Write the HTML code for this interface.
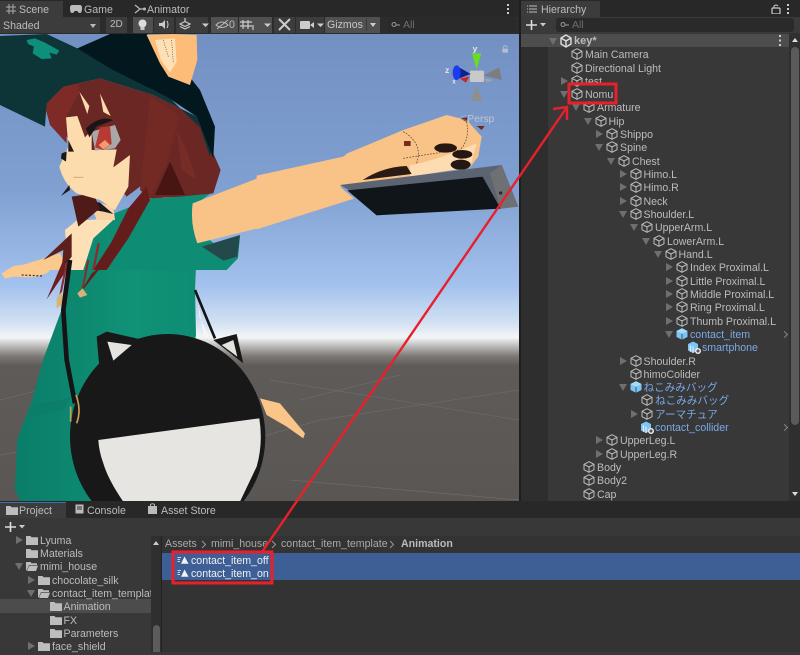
<!DOCTYPE html>
<html><head><meta charset="utf-8"><style>
html,body{margin:0;padding:0;background:#383838}
body{width:800px;height:652px;position:relative;overflow:hidden;font:10.6px/14px "Liberation Sans","Noto Sans CJK JP",sans-serif;color:#bcbcbc;filter:blur(.3px)}
.b{position:absolute}
.r{position:absolute;margin:0;height:14px;line-height:16px;white-space:nowrap}
.c{position:absolute;left:-14px;top:1px;width:12px;height:12px}
.d,.t{position:absolute;width:0;height:0;left:-25px}
.d{top:4px;border-left:4px solid transparent;border-right:4px solid transparent;border-top:7px solid #6f6f6f}
.t{top:3px;left:-24px;border-top:4px solid transparent;border-bottom:4px solid transparent;border-left:7px solid #6f6f6f}
.p{color:#7aa9e8}
.ch{position:absolute;left:782px;width:4px;height:4px;border-top:1.2px solid #888;border-right:1.2px solid #888;transform:rotate(45deg)}
.tb{position:absolute;top:17px;height:16px;background:#3c3c3c}
.tl{background:#505050}
.tx{position:absolute;white-space:nowrap}
.f{position:absolute;left:-14px;top:2px;width:12px;height:10px}
</style></head><body>
<svg width="0" height="0" style="position:absolute"><defs>
<symbol id="cb" viewBox="0 0 12 12"><path d="M6 .7 11 3.3V8.7L6 11.3 1 8.7V3.3ZM1 3.3 6 6 11 3.3M6 6V11.3" fill="none" stroke="#bdbdbd" stroke-width="1"/></symbol>
<symbol id="pf" viewBox="0 0 12 12"><path d="M6 .3 11.5 3V9L6 11.7 .5 9V3Z" fill="#7cc6f7"/><path d="M.5 3 6 5.8 11.5 3 6 .3Z" fill="#a6dcfb"/><path d="M6 5.8V11.7" stroke="#333" stroke-width=".8"/></symbol>
<symbol id="pp" viewBox="0 0 15 13"><path d="M1 3 6 .5 11 3V9.5L6 12 1 9.5Z" fill="#7cc6f7"/><path d="M6 5.5V12M3.5 4.3V10.8" stroke="#e8e8e8" stroke-width="1.2"/><circle cx="11" cy="10" r="3" fill="#eee"/><path d="M9.3 10H12.7M11 8.3V11.7" stroke="#222" stroke-width="1"/></symbol>
<symbol id="fd" viewBox="0 0 12 10"><path d="M0 1H4.5L5.5 2.2H12V10H0Z" fill="#bdbdbd"/></symbol>
<symbol id="fo" viewBox="0 0 12 10"><path d="M0 1H4.5L5.5 2.2H11V4H3L1 9 0 9.5ZM3.3 4.6H12L10 10H1Z" fill="#bdbdbd"/></symbol>
<symbol id="an" viewBox="0 0 12 10"><path d="M4 8.8 7.5 1.5 11.6 8.8Z" fill="#f2f2f2"/><path d="M.5 2.5H4M.5 4.5H3M.5 6.5H3" stroke="#cfd8e8" stroke-width="1"/></symbol>
<linearGradient id="sky" x1="0" y1="34" x2="0" y2="501" gradientUnits="userSpaceOnUse">
<stop offset="0" stop-color="#7390c2"/><stop offset=".33" stop-color="#80a0d2"/><stop offset=".54" stop-color="#a3c2ee"/><stop offset=".62" stop-color="#d4e2f2"/><stop offset=".65" stop-color="#f3f6f6"/><stop offset=".67" stop-color="#b6b6b4"/><stop offset=".69" stop-color="#7d7976"/><stop offset=".71" stop-color="#5f5b58"/><stop offset="1" stop-color="#5a5653"/></linearGradient>
<linearGradient id="teal" x1="0" y1="0" x2="1" y2="0"><stop offset="0" stop-color="#0a7d68"/><stop offset=".55" stop-color="#109276"/><stop offset="1" stop-color="#0c8a72"/></linearGradient>
</defs></svg>

<!-- scene -->
<svg class="b" style="left:0;top:0;clip-path:inset(34px 281px 151px 0)" width="800" height="652" viewBox="0 0 800 652">
<rect x="0" y="34" width="519" height="467" fill="url(#sky)"/>
<g stroke="#6e6a67" stroke-width=".7" fill="none"><path d="M0 400 60 385M0 455 40 448M250 440 320 420 519 390M270 380 519 420M290 480 519 500M300 400 400 375"/></g>
<!-- body -->
<path d="M68 262 63 306 43 360 32 400 17 440 15 490 20 501H150L180 420 196 335 195 290 196 266 230 258 160 195 110 215 75 240Z" fill="url(#teal)"/>
<path d="M30 405 70 398 64 410 28 418Z" fill="#0b7c68" opacity=".7"/>
<g transform="translate(0,30) scale(.3333)">
<!-- right arm sleeve -->
<path d="M330 560 450 510 640 485 590 520 575 590 600 650 720 618 714 685 680 720 330 720Z" fill="#0e8c74"/>
<path d="M606 650 720 615 712 680 670 692Z" fill="#24494a"/>
<path d="M578 520 785 440V592L592 640Q570 580 578 520Z" fill="#f9c286"/>
<!-- chest -->
<path d="M195 600 230 572 345 565 280 625 250 720H205Z" fill="#fde0b6"/>
<path d="M268 510 340 530 345 570 290 570Z" fill="#f8d2a4"/>
<path d="M265 512 300 518 340 552 310 545 280 540Z" fill="#1f1a1a"/>
<path d="M20 720 180 670 210 720Z" fill="#fbc98d"/>
<!-- back hair -->
<path d="M215 500 235 590 300 535 280 490Z" fill="#4f1a18"/>
<path d="M215 610 130 690 190 660 185 720 215 680Z" fill="#5c1f1c"/>
<path d="M135 230Q140 190 190 170L300 145 460 195 590 260 640 370 662 420 640 490 540 500 450 505 420 470 380 500 300 400 150 280Z" fill="#6b2724"/>
<path d="M465 495 510 395 555 495Z" fill="#481513"/>
<path d="M530 300 545 420 590 450 560 360Z" fill="#762c27"/>
<path d="M420 480 450 200 540 260 500 400 450 505Z" fill="#732a25"/>
<!-- long strand -->
<path d="M440 470 385 535 335 635 280 720H320L385 625 450 510Z" fill="#651d1b"/>
<path d="M296 640 280 720" stroke="#8e2b2b" stroke-width="7"/>
<!-- face -->
<path d="M178 410 205 350 198 262 232 258 255 322 275 300 275 360 350 358 340 412 390 375 385 470 345 540 300 510 230 490Q190 460 178 410Z" fill="#fcdcad"/>
<path d="M238 185 268 228 262 252ZM300 190 332 258 310 246Z" fill="#fcdcad"/>
<path d="M275 305 345 285 362 330 345 355 285 362Z" fill="#a9a8a8"/>
<path d="M285 352 300 292 330 288 335 342 310 360Z" fill="#b83a34"/>
<path d="M296 345 315 330 330 345 310 358Z" fill="#f49a6e"/>
<path d="M258 295Q300 255 340 270L290 290 268 322Z" fill="#1b1515"/>
<path d="M185 370 200 365 198 395 183 385Z" fill="#1c1717"/>
<path d="M205 330 222 365 205 365Z" fill="#241a18"/>
<path d="M220 442H250" stroke="#d8a57c" stroke-width="3"/>
<path d="M183 498 208 465 210 480Z" fill="#1f1a1a"/>
<!-- side hair -->
<path d="M135 230 150 185 235 155 238 185 198 262 200 340 150 285Z" fill="#7e2b28"/>
<!-- hat -->
<path d="M0 18 140 12 232 55 330 100 460 180 500 195 638 330 630 380 590 260 460 195 300 145 190 170 140 220 135 290 0 225Z" fill="#0d3538"/>
<path d="M232 55 330 12H440L545 110 600 180 645 290 640 385 590 260 500 200 330 115Z" fill="#03181e"/>
<path d="M80 30 105 25 135 38 178 62 170 74 148 68 155 85 125 87 98 70 102 50 84 42Z" fill="#0d8f7c"/>
<!-- ear -->
<path d="M440 15 520 12 590 15 592 90 570 165 505 140 480 100Z" fill="#fdbd78"/>
<path d="M465 30 525 25 530 95 510 128 482 88Z" fill="#fde0b4"/>
<path d="M490 30 505 80M515 30 520 100" stroke="#5b4a3a" stroke-width="2" stroke-dasharray="3 4"/>
</g>
<g transform="translate(0,260) scale(.3333)">
<!-- left arm -->
<path d="M5 40 40 18 160 2 170 12 140 40 100 52 40 50 15 56Z" fill="#fcc98e"/>
<path d="M65 45 130 48" stroke="#50402e" stroke-width="4" stroke-dasharray="6 5"/>
<!-- hair ends + necklace -->
<path d="M190 0 140 118 200 30Z" fill="#6b1f1c"/>
<path d="M320 0 240 100 275 40 330 0Z" fill="#6a1b1a"/>
<path d="M200 10 180 110M265 0 248 85" stroke="#8a2b2c" stroke-width="6"/>
<path d="M170 115 185 95 192 130 170 145Z" fill="#d7b378"/>
<path d="M232 100 248 85 262 105 240 113Z" fill="#d7b378"/>
<path d="M210 0 190 150 200 300 225 430" fill="none" stroke="#141414" stroke-width="14"/>
<path d="M585 90 645 235" stroke="#141414" stroke-width="8"/>
<path d="M595 130 612 230 630 235 598 170Z" fill="#f4f6f6"/>
<!-- tail -->
<path d="M780 415 840 430 915 520 910 535 860 500 800 465Z" fill="#f9c588"/>
<!-- bag -->
<ellipse cx="503" cy="530" rx="293" ry="308" fill="#181818"/>
<path d="M290 230 320 215 430 240 300 345Z" fill="#181818"/>
<path d="M640 240 710 222 730 310Z" fill="#181818"/>
<path d="M322 245 395 255 340 302Z" fill="#e4e3df"/>
<path d="M665 255 700 240 712 290Z" fill="#e4e3df"/>
<path d="M295 540 778 475Q790 550 770 620L720 725H370Q325 660 310 610 297 575 295 540Z" fill="#e6e5e1"/>
<path d="M228 405Q245 450 230 490M212 440V485" fill="none" stroke="#c99f58" stroke-width="5"/>
</g>
<g transform="translate(260,30) scale(.3333)">
<!-- arm & paw -->
<path d="M-10 437 250 380 262 370 430 300 560 255 620 270 665 320 655 380 630 412 240 470 282 506 -10 598Z" fill="#f9c286"/>
<path d="M430 305Q490 340 470 400M620 275Q630 330 600 360M430 385Q520 370 600 360" fill="none" stroke="#3f342b" stroke-width="2" stroke-dasharray="5 4"/>
<path d="M450 405Q520 395 650 340L630 412 450 440Z" fill="#fcdcb0"/>
<ellipse cx="557" cy="354" rx="34" ry="14" fill="#251712"/>
<ellipse cx="607" cy="373" rx="30" ry="13" fill="#251712"/>
<ellipse cx="602" cy="404" rx="30" ry="15" fill="#251712"/>
<path d="M308 450Q370 410 440 408L455 432Z" fill="#2a1a14"/>
<rect x="432" y="333" width="20" height="15" fill="#7a2a22"/>
<path d="M600 265 622 262 620 276ZM650 288 674 288 665 300Z" fill="#6b2a25"/>
<!-- phone -->
<path d="M240 465 725 405 775 530 722 536 668 440 270 482Z" fill="#5b6470"/>
<path d="M690 430 725 405 775 530 722 536Z" fill="#6f7073"/>
<path d="M262 481 668 440 722 536 350 556Z" fill="#10151a"/>
<circle cx="722" cy="489" r="5" fill="#2a2a2a"/>
<!-- gizmo -->
<rect x="630" y="122" width="42" height="34" rx="3" fill="#c9c9c9"/>
<path d="M636 70H664L650 118Z" fill="#66e01e"/>
<path d="M632 213H668L650 166Z" fill="#8f8f8f"/>
<path d="M672 136 718 112 725 150Z" fill="#7d7d7d"/>
<path d="M632 132 590 108 590 148Z" fill="#10208c"/>
<ellipse cx="590" cy="128" rx="12" ry="22" fill="#1a3cf0"/>
<path d="M600 146 628 140 618 158Z" fill="#d42020"/>
<path d="M672 145 700 150 680 158Z" fill="#a4a4a4"/>
<text x="555" y="129" font-family="Liberation Sans" font-size="26" font-weight="700" fill="#e6e6e6">z</text>
<text x="638" y="65" font-family="Liberation Sans" font-size="26" font-weight="700" fill="#e6e6e6">y</text>
<text x="577" y="160" font-family="Liberation Sans" font-size="18" font-weight="700" fill="#e6e6e6">x</text>
<text x="622" y="276" font-family="Liberation Sans" font-size="31" fill="#c0c6d2">Persp</text>
<path d="M598 264 620 255M598 264 620 272" stroke="#c0c6d2" stroke-width="2" opacity=".6"/>
<rect x="727" y="56" width="17" height="12" rx="1" fill="#b4bed2"/><path d="M730 56V50Q735 44 741 50V56" fill="none" stroke="#b4bed2" stroke-width="2.5"/>
</g>
</svg>

<!-- top bars -->
<div class="b" style="left:0;top:0;width:519px;height:17px;background:#282828"></div>
<div class="b" style="left:0;top:1px;width:63px;height:16px;background:#3c3c3c"></div>
<svg class="b" style="left:6px;top:4px" width="10" height="10"><path d="M3 0V10M7 0V10M0 3H10M0 7H10" stroke="#aaa" stroke-width="1"/></svg>
<div class="tx" style="left:19px;top:3px">Scene</div>
<svg class="b" style="left:70px;top:5px" width="12" height="8"><path d="M2 0H10Q12 0 12 3 12 8 10 8 8 8 7.5 6H4.5Q4 8 2 8 0 8 0 3 0 0 2 0Z" fill="#bbb"/></svg>
<div class="tx" style="left:84px;top:3px">Game</div>
<svg class="b" style="left:134px;top:4px" width="12" height="10"><path d="M1 1 6 5 1 9M6 5H11" stroke="#bbb" fill="none" stroke-width="1.2"/><circle cx="10.5" cy="5" r="1.5" fill="#bbb"/></svg>
<div class="tx" style="left:147px;top:3px">Animator</div>
<svg class="b" style="left:505px;top:4px" width="6" height="10"><path d="M3 0V2M3 4V6M3 8V10" stroke="#ccc" stroke-width="2"/></svg>

<div class="b" style="left:0;top:17px;width:519px;height:17px;background:#2c2c2c"></div>
<div class="tb" style="left:0;width:100px"></div>
<div class="tx" style="left:3px;top:19px">Shaded</div>
<div class="b" style="left:90px;top:24px;border-left:3.5px solid transparent;border-right:3.5px solid transparent;border-top:4px solid #bbb"></div>
<div class="tb" style="left:106px;width:21px"></div>
<div class="tx" style="left:110px;top:18px;font-size:10px">2D</div>
<div class="tb tl" style="left:133px;width:20px"></div>
<div class="tb" style="left:154px;width:20px"></div>
<div class="tb" style="left:176px;width:32px"></div>
<div class="tb tl" style="left:211px;width:27px"></div>
<div class="tb tl" style="left:239px;width:33px"></div>
<div class="tb" style="left:274px;width:21px"></div>
<div class="tb" style="left:296px;width:28px"></div>
<div class="tb tl" style="left:325px;width:55px"></div>
<svg class="b" style="left:133px;top:17px" width="200" height="16">
<circle cx="9.5" cy="6.5" r="4" fill="#ddd"/><rect x="7.5" y="10" width="4" height="3" fill="#ccc"/>
<path d="M26 6H29L32 3V12L29 9H26Z" fill="#ccc"/><path d="M34 4Q36 7.5 34 11" stroke="#ccc" fill="none"/>
<path d="M47 7 52 4.5 57 7 52 9.5ZM47 9.5 52 12 57 9.5M52 1V4" stroke="#ccc" fill="none" stroke-width="1.2"/>
<path d="M69 6.5H76L72.5 10Z" fill="#ccc"/>
<path d="M83 8Q89 2 95 8 89 13 83 8ZM84 12 95 3" stroke="#bbb" fill="none"/>
<path d="M110 3V12M115 3V12M107 5H119M107 9H119M120 8V13" stroke="#ccc" stroke-width="1.2" fill="none"/>
<path d="M131 6.5H138L134.5 10Z" fill="#ccc"/>
<path d="M146 2 157 13M157 2 146 13" stroke="#ccc" stroke-width="2"/>
<rect x="167" y="4" width="10" height="8" rx="1" fill="#ccc"/><path d="M177 8 181 5V11Z" fill="#ccc"/>
<path d="M184 6.5H191L187.5 10Z" fill="#ccc"/>
</svg>
<div class="tx" style="left:229px;top:18px;color:#bdbdbd">0</div>
<div class="tx" style="left:327px;top:18px;color:#c8c8c8">Gizmos</div>
<div class="b" style="left:366px;top:18px;width:1px;height:13px;background:#3a3a3a"></div>
<div class="b" style="left:370px;top:23px;border-left:3.5px solid transparent;border-right:3.5px solid transparent;border-top:4px solid #ccc"></div>
<div class="b" style="left:387px;top:18px;width:129px;height:14px;background:#2a2a2a;border-radius:3px"></div>
<svg class="b" style="left:391px;top:21px" width="10" height="8"><circle cx="3" cy="3.5" r="2" fill="none" stroke="#999"/><path d="M5 4H9" stroke="#999"/></svg>
<div class="tx" style="left:403px;top:18px;color:#6e6e6e;font-size:10.5px">All</div>

<!-- hierarchy -->
<div class="b" style="left:519px;top:0;width:2px;height:501px;background:#1e1e1e"></div>
<div class="b" style="left:521px;top:0;width:279px;height:17px;background:#282828"></div>
<div class="b" style="left:521px;top:1px;width:79px;height:16px;background:#3c3c3c"></div>
<svg class="b" style="left:527px;top:5px" width="10" height="9"><path d="M2 1H10M2 4H10M2 7H10M0 1H1M0 4H1M0 7H1" stroke="#bbb"/></svg>
<div class="tx" style="left:541px;top:3px">Hierarchy</div>
<svg class="b" style="left:771px;top:4px" width="25" height="10"><rect x="1" y="4" width="8" height="6" rx="1" fill="none" stroke="#ccc" stroke-width="1.2"/><path d="M3 4V2Q5 0 7 2" fill="none" stroke="#ccc"/><path d="M17 0V2M17 4V6M17 8V10" stroke="#ccc" stroke-width="2"/></svg>
<div class="b" style="left:521px;top:17px;width:279px;height:16px;background:#3a3a3a"></div>
<svg class="b" style="left:526px;top:19px" width="22" height="12"><path d="M5.5 1V11M0 6H11" stroke="#ddd" stroke-width="1.6"/><path d="M14 4H20L17 7.5Z" fill="#ccc"/></svg>
<div class="b" style="left:556px;top:18px;width:238px;height:14px;background:#2a2a2a;border-radius:3px"></div>
<svg class="b" style="left:560px;top:21px" width="10" height="8"><circle cx="3" cy="3.5" r="2" fill="none" stroke="#999"/><path d="M5 4H9" stroke="#999"/></svg>
<div class="tx" style="left:572px;top:18px;color:#6e6e6e;font-size:10.5px">All</div>
<div class="b" style="left:521px;top:33px;width:268px;height:468px;background:#383838"></div>
<div class="b" style="left:521px;top:47px;width:27px;height:454px;background:#2e2e2e"></div>
<div class="b" style="left:521px;top:34px;width:268px;height:13px;background:#4d4d4d"></div>
<div class="b" style="left:789px;top:33px;width:11px;height:468px;background:#2f2f2f"></div>
<div class="b" style="left:791px;top:47px;width:8px;height:378px;background:#5a5a5a;border-radius:4px"></div>
<div class="b" style="left:792px;top:38px;border-left:3px solid transparent;border-right:3px solid transparent;border-bottom:4px solid #ddd"></div>
<div class="b" style="left:792px;top:492px;border-left:3px solid transparent;border-right:3px solid transparent;border-top:4px solid #ddd"></div>
<svg class="b" style="left:778px;top:35px" width="4" height="11"><path d="M2 0V2M2 4.5V6.5M2 9V11" stroke="#ccc" stroke-width="2"/></svg>
<i class="d" style="left:549px;top:38px"></i>
<svg class="b" style="left:559px;top:34px" width="14" height="14"><path d="M7 1 12 4V10L7 13 2 10V4ZM7 7 2 4M7 7 12 4M7 7V13" stroke="#ddd" stroke-width="1.4" fill="none"/></svg>
<div class="r" style="left:574px;top:33px;font-weight:700;font-size:11px">key*</div>

<div class="r" style="top:47px;left:585px"><svg class="c"><use href="#cb"/></svg>Main Camera</div>
<div class="r" style="top:61px;left:585px"><svg class="c"><use href="#cb"/></svg>Directional Light</div>
<div class="r" style="top:74px;left:585px"><i class="t"></i><svg class="c"><use href="#cb"/></svg>test</div>
<div class="r" style="top:87px;left:585px"><i class="d"></i><svg class="c"><use href="#cb"/></svg>Nomu</div>
<div class="r" style="top:100px;left:597px"><i class="d"></i><svg class="c"><use href="#cb"/></svg>Armature</div>
<div class="r" style="top:114px;left:608.5px"><i class="d"></i><svg class="c"><use href="#cb"/></svg>Hip</div>
<div class="r" style="top:127px;left:620px"><i class="t"></i><svg class="c"><use href="#cb"/></svg>Shippo</div>
<div class="r" style="top:140px;left:620px"><i class="d"></i><svg class="c"><use href="#cb"/></svg>Spine</div>
<div class="r" style="top:154px;left:632px"><i class="d"></i><svg class="c"><use href="#cb"/></svg>Chest</div>
<div class="r" style="top:167px;left:643.5px"><i class="t"></i><svg class="c"><use href="#cb"/></svg>Himo.L</div>
<div class="r" style="top:180px;left:643.5px"><i class="t"></i><svg class="c"><use href="#cb"/></svg>Himo.R</div>
<div class="r" style="top:194px;left:643.5px"><i class="t"></i><svg class="c"><use href="#cb"/></svg>Neck</div>
<div class="r" style="top:207px;left:643.5px"><i class="d"></i><svg class="c"><use href="#cb"/></svg>Shoulder.L</div>
<div class="r" style="top:220px;left:655px"><i class="d"></i><svg class="c"><use href="#cb"/></svg>UpperArm.L</div>
<div class="r" style="top:234px;left:667px"><i class="d"></i><svg class="c"><use href="#cb"/></svg>LowerArm.L</div>
<div class="r" style="top:247px;left:678.5px"><i class="d"></i><svg class="c"><use href="#cb"/></svg>Hand.L</div>
<div class="r" style="top:260px;left:690px"><i class="t"></i><svg class="c"><use href="#cb"/></svg>Index Proximal.L</div>
<div class="r" style="top:274px;left:690px"><i class="t"></i><svg class="c"><use href="#cb"/></svg>Little Proximal.L</div>
<div class="r" style="top:287px;left:690px"><i class="t"></i><svg class="c"><use href="#cb"/></svg>Middle Proximal.L</div>
<div class="r" style="top:300px;left:690px"><i class="t"></i><svg class="c"><use href="#cb"/></svg>Ring Proximal.L</div>
<div class="r" style="top:314px;left:690px"><i class="t"></i><svg class="c"><use href="#cb"/></svg>Thumb Proximal.L</div>
<div class="r p" style="top:327px;left:690px"><i class="d"></i><svg class="c"><use href="#pf"/></svg>contact_item</div><span class="ch" style="top:332px"></span>
<div class="r p" style="top:340px;left:702px"><svg class="c" style="left:-15px;width:15px;height:13px"><use href="#pp"/></svg>smartphone</div>
<div class="r" style="top:354px;left:643.5px"><i class="t"></i><svg class="c"><use href="#cb"/></svg>Shoulder.R</div>
<div class="r" style="top:367px;left:643.5px"><svg class="c"><use href="#cb"/></svg>himoColider</div>
<div class="r p" style="top:380px;left:643.5px"><i class="d"></i><svg class="c"><use href="#pf"/></svg>ねこみみバッグ</div>
<div class="r p" style="top:393px;left:655px"><svg class="c"><use href="#cb"/></svg>ねこみみバッグ</div>
<div class="r p" style="top:407px;left:655px"><i class="t"></i><svg class="c"><use href="#cb"/></svg>アーマチュア</div>
<div class="r p" style="top:420px;left:655px"><svg class="c" style="left:-15px;width:15px;height:13px"><use href="#pp"/></svg>contact_collider</div><span class="ch" style="top:425px"></span>
<div class="r" style="top:433px;left:620px"><i class="t"></i><svg class="c"><use href="#cb"/></svg>UpperLeg.L</div>
<div class="r" style="top:447px;left:620px"><i class="t"></i><svg class="c"><use href="#cb"/></svg>UpperLeg.R</div>
<div class="r" style="top:460px;left:597px"><svg class="c"><use href="#cb"/></svg>Body</div>
<div class="r" style="top:473px;left:597px"><svg class="c"><use href="#cb"/></svg>Body2</div>
<div class="r" style="top:487px;left:597px"><svg class="c"><use href="#cb"/></svg>Cap</div>

<!-- project -->
<div class="b" style="left:0;top:501px;width:800px;height:17px;background:#282828"></div>
<div class="b" style="left:0;top:502px;width:66px;height:16px;background:#3c3c3c;border-top:1px solid #3a72b0;box-sizing:border-box"></div>
<svg class="b" style="left:6px;top:505px" width="12" height="10"><use href="#fd"/></svg>
<div class="tx" style="left:19px;top:504px">Project</div>
<svg class="b" style="left:75px;top:504px" width="9" height="10"><rect x=".5" y=".5" width="8" height="9" fill="#bbb"/><path d="M2 3H7M2 5H7" stroke="#333"/></svg>
<div class="tx" style="left:87px;top:504px">Console</div>
<svg class="b" style="left:148px;top:503px" width="9" height="11"><path d="M0 3H9V11H0Z" fill="#bbb"/><path d="M2.5 3V1.5Q4.5 0 6.5 1.5V3" stroke="#bbb" fill="none"/></svg>
<div class="tx" style="left:161px;top:504px">Asset Store</div>
<div class="b" style="left:0;top:518px;width:800px;height:18px;background:#383838"></div>
<svg class="b" style="left:5px;top:521px" width="22" height="12"><path d="M5.5 1V11M0 6H11" stroke="#ddd" stroke-width="1.6"/><path d="M14 4H20L17 7.5Z" fill="#ccc"/></svg>
<div class="b" style="left:0;top:536px;width:161px;height:116px;background:#383838"></div>
<div class="b" style="left:161px;top:536px;width:639px;height:116px;background:#333"></div>
<div class="b" style="left:161px;top:536px;width:1px;height:116px;background:#222"></div>
<div class="b" style="left:0;top:599px;width:151px;height:14px;background:#4c4c4c"></div>
<div class="b" style="left:151px;top:536px;width:10px;height:116px;background:#2f2f2f"></div>
<div class="b" style="left:153px;top:625px;width:7px;height:27px;background:#5c5c5c;border-radius:4px 4px 0 0"></div>
<div class="b" style="left:153px;top:541px;border-left:3px solid transparent;border-right:3px solid transparent;border-bottom:4px solid #ccc"></div>

<div class="r" style="top:533px;left:40px"><i class="t"></i><svg class="f"><use href="#fd"/></svg>Lyuma</div>
<div class="r" style="top:546px;left:40px"><svg class="f"><use href="#fd"/></svg>Materials</div>
<div class="r" style="top:559px;left:40px"><i class="d"></i><svg class="f"><use href="#fo"/></svg>mimi_house</div>
<div class="r" style="top:573px;left:52px"><i class="t"></i><svg class="f"><use href="#fd"/></svg>chocolate_silk</div>
<i class="d" style="left:27px;top:590px"></i>
<div class="r" style="top:586px;left:38px;width:113px;overflow:hidden;text-indent:14px"><svg class="f" style="left:0"><use href="#fo"/></svg>contact_item_template</div>
<div class="r" style="top:599px;left:63.5px"><svg class="f"><use href="#fd"/></svg>Animation</div>
<div class="r" style="top:613px;left:63.5px"><svg class="f"><use href="#fd"/></svg>FX</div>
<div class="r" style="top:626px;left:63.5px"><svg class="f"><use href="#fd"/></svg>Parameters</div>
<div class="r" style="top:639px;left:52px"><i class="t"></i><svg class="f"><use href="#fd"/></svg>face_shield</div>

<div class="tx" style="left:165px;top:537px;color:#aaa">Assets</div>
<div class="tx" style="left:211px;top:537px;color:#aaa">mimi_house</div>
<div class="tx" style="left:281px;top:537px;color:#aaa">contact_item_template</div>
<div class="tx" style="left:401px;top:537px;font-weight:700">Animation</div>
<svg class="b" style="left:201px;top:540px" width="200" height="9"><path d="M1 1 4.5 4.5 1 8" stroke="#999" fill="none"/><path d="M71 1 74.5 4.5 71 8" stroke="#999" fill="none"/><path d="M189 1 192.5 4.5 189 8" stroke="#999" fill="none"/></svg>
<div class="b" style="left:162px;top:553px;width:638px;height:27px;background:#3e5f96"></div>
<svg class="b" style="left:177px;top:555px" width="12" height="10"><use href="#an"/></svg>
<div class="tx" style="left:191px;top:554px;color:#f0f0f0">contact_item_off</div>
<svg class="b" style="left:177px;top:568px" width="12" height="10"><use href="#an"/></svg>
<div class="tx" style="left:191px;top:567px;color:#f0f0f0">contact_item_on</div>

<!-- red overlay -->
<svg class="b" style="left:0;top:0" width="800" height="652" fill="none" stroke="#e8202c">
<rect x="569" y="84" width="47" height="19" stroke-width="3"/>
<rect x="173" y="552" width="99" height="31" stroke-width="3"/>
<path d="M262 552 567 107M553 109 567 107 567 120" stroke-width="2.4"/>
</svg>
</body></html>
